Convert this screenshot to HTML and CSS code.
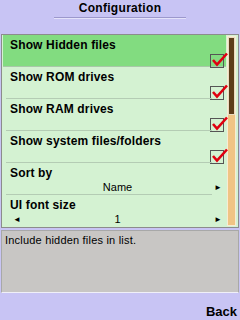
FILE: index.html
```html
<!DOCTYPE html>
<html lang="en">
<head>
    <meta charset="UTF-8">
    <title>Configuration</title>
    <link rel="stylesheet" href="styles.css">
</head>
<body>
    <div class="title"><span>Configuration</span></div>

    <div class="list">
        <div class="items">
            <div class="item selected">
                <div class="label">Show Hidden files</div>
                <div class="check-row">
                    <svg class="check" width="20" height="16" viewBox="0 0 20 16">
                        <rect x="1.5" y="2.5" width="13" height="13" fill="none" stroke="#555" />
                        <path d="M4 8 L8 12.5 L18 1.5" fill="none" stroke="#e00010" stroke-width="2.6" />
                    </svg>
                </div>
            </div>
            <div class="item">
                <div class="label">Show ROM drives</div>
                <div class="check-row">
                    <svg class="check" width="20" height="16" viewBox="0 0 20 16">
                        <rect x="1.5" y="2.5" width="13" height="13" fill="none" stroke="#555" />
                        <path d="M4 8 L8 12.5 L18 1.5" fill="none" stroke="#e00010" stroke-width="2.6" />
                    </svg>
                </div>
            </div>
            <div class="item">
                <div class="label">Show RAM drives</div>
                <div class="check-row">
                    <svg class="check" width="20" height="16" viewBox="0 0 20 16">
                        <rect x="1.5" y="2.5" width="13" height="13" fill="none" stroke="#555" />
                        <path d="M4 8 L8 12.5 L18 1.5" fill="none" stroke="#e00010" stroke-width="2.6" />
                    </svg>
                </div>
            </div>
            <div class="item">
                <div class="label">Show system files/folders</div>
                <div class="check-row">
                    <svg class="check" width="20" height="16" viewBox="0 0 20 16">
                        <rect x="1.5" y="2.5" width="13" height="13" fill="none" stroke="#555" />
                        <path d="M4 8 L8 12.5 L18 1.5" fill="none" stroke="#e00010" stroke-width="2.6" />
                    </svg>
                </div>
            </div>
            <div class="item">
                <div class="label">Sort by</div>
                <div class="choice">
                    <span class="arrow"></span>
                    <span class="value">Name</span>
                    <span class="arrow right">&#9658;</span>
                </div>
            </div>
            <div class="item last">
                <div class="label">UI font size</div>
                <div class="choice">
                    <span class="arrow">&#9668;</span>
                    <span class="value">1</span>
                    <span class="arrow right">&#9658;</span>
                </div>
            </div>
        </div>
        <div class="scrollbar"><div class="thumb"></div></div>
    </div>

    <div class="desc">Include hidden files in list.</div>

    <div class="softkeys"><span>Back</span></div>
</body>
</html>
```

FILE: styles.css
```css
body { margin: 0; width: 240px; height: 320px; overflow: hidden; background-color: #c8c4f4; font-family: "Liberation Sans", Arial, sans-serif; color: #000; }

.title { height: 34px; display: flex; justify-content: center; }
.title span {
    display: block;
    width: 132px;
    height: 16px;
    margin-top: 1px;
    text-align: center;
    font-size: 12px;
    font-weight: bold;
    letter-spacing: 0.3px;
    border-bottom: 1px solid #9c98cc;
    box-shadow: 0 1px 0 #e4e2fa;
}

.list {
    height: 192px;
    margin: 0 1px;
    display: flex;
    background-color: #d4f2d2;
    border: 1px solid #8c8c8c;
}
.items { flex: 1; padding-left: 1px; }
.item {
    height: 32px;
    display: flex;
    flex-direction: column;
    position: relative;
}
.item::after {
    content: "";
    position: absolute;
    left: 3px;
    right: 14px;
    bottom: 0;
    height: 1px;
    background: #b4ccb4;
}
.item.last::after, .item.selected::after { display: none; }
.item.selected { background-color: #82dc80; border-bottom: 1px solid #a8c8a8; height: 31px; }

.label { padding: 3px 0 0 7px; font-size: 12px; font-weight: bold; letter-spacing: 0.15px; line-height: 14px; }
.check-row { display: flex; justify-content: flex-end; }
.check { display: block; margin-right: -3px; }

.choice { display: flex; align-items: center; padding: 1px 4px 0 10px; font-size: 11px; line-height: 13px; }
.choice .arrow { width: 12px; font-size: 8px; }
.choice .arrow.right { text-align: right; }
.choice .value { flex: 1; text-align: center; }

.scrollbar {
    width: 7px;
    margin: 1px 2px 1px 1px;
    background-color: #f0c484;
    border: 1px solid #f8ecd4;
}
.thumb { height: 76px; background-color: #5c3c18; border: 1px solid #e8dcc0; }

.desc {
    height: 58px;
    margin: 2px 1px 0;
    padding: 3px 0 0 3px;
    background-color: #c8c6c4;
    border: 1px solid #a8a8a8;
    border-bottom-color: #f0f0f8;
    font-size: 11px;
    letter-spacing: 0.2px;
}

.softkeys { display: flex; justify-content: flex-end; padding: 11px 3px 0 0; }
.softkeys span { font-size: 13px; font-weight: bold; }
```
